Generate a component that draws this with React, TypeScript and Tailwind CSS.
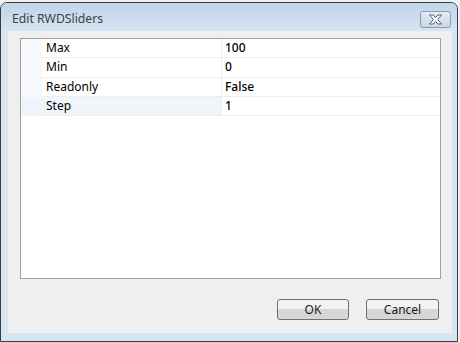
const rows = [
  { name: "Max", value: "100" },
  { name: "Min", value: "0" },
  { name: "Readonly", value: "False" },
  { name: "Step", value: "1", selected: true },
];

function CloseGlyph() {
  return (
    <svg width="15" height="11" viewBox="0 0 15 11">
      <path
        d="M1.5 1 H5.2 L7.5 3.6 L9.8 1 H13.5 L9.6 5.5 L13.5 10 H9.8 L7.5 7.4 L5.2 10 H1.5 L5.4 5.5 Z"
        fill="#ffffff"
        stroke="#56606e"
        strokeWidth="1"
        strokeLinejoin="round"
      />
    </svg>
  );
}

function Button({ label, width }: { label: string; width: string }) {
  return (
    <button
      className={`${width} h-[21px] rounded-[3px] border border-[#707070] bg-gradient-to-b from-[#f2f2f2] from-50% to-[#d6d6d6] to-50% text-[12px] text-[#1a1a1a] leading-none`}
    >
      {label}
    </button>
  );
}

export default function App() {
  return (
    <div className="w-[460px] h-[342px] bg-[#eef0f2] pt-[2px] font-['Noto_Sans',sans-serif]">
      <div className="w-[458px] h-[340px] border border-[#3b3b3b] rounded-t-[7px] bg-[#d7e4f2] flex flex-col overflow-hidden">
        {/* Title bar */}
        <div className="h-[28px] flex items-start justify-between pl-[11px] pr-[6px] bg-gradient-to-b from-[#c3d4e8] to-[#d7e4f2]">
          <span className="mt-[7px] text-[12.2px] text-[#3a3f47]">Edit RWDSliders</span>
          <div className="mt-[8px] w-[31px] h-[17px] rounded-[3px] border border-[#8b9bb0] bg-gradient-to-b from-[#e3ebf4] to-[#c9d7e7] flex items-center justify-center">
            <CloseGlyph />
          </div>
        </div>

        {/* Client area */}
        <div className="ml-[7px] w-[444px] h-[302px] bg-[#efefef] flex flex-col pt-[7px] pl-[12px]">
          <div className="w-[421px] h-[241px] border border-[#a0a0a0] bg-white flex flex-col text-[12px] text-black">
            {rows.map((r) => (
              <div key={r.name} className="flex h-[19.25px]">
                <div className={`w-[21px] ${r.selected ? "bg-[#f0f4fa]" : "bg-[#f7f9fc]"}`} />
                <div
                  className={`w-[180px] border-b border-r border-[#eeeeee] pl-[4px] flex items-center ${r.selected ? "bg-[#f0f5fb]" : "bg-white"}`}
                >
                  {r.name}
                </div>
                <div className="flex-1 border-b border-[#eeeeee] pl-[3px] flex items-center font-medium">
                  {r.value}
                </div>
              </div>
            ))}
          </div>
          <div className="mt-[20px] flex justify-end gap-[17px] pr-[13px]">
            <Button label="OK" width="w-[72px]" />
            <Button label="Cancel" width="w-[73px]" />
          </div>
        </div>
      </div>
    </div>
  );
}
